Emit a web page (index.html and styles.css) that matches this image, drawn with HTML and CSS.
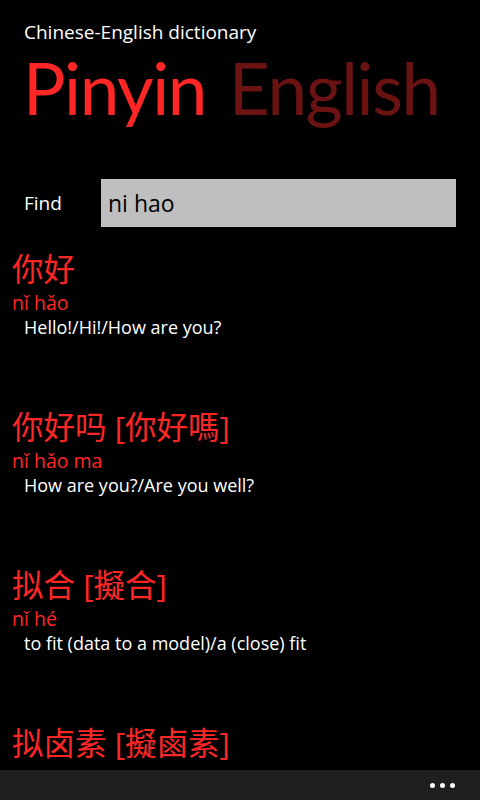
FILE: index.html
```html
<!DOCTYPE html>
<html>
<head>
    <title>Chinese-English dictionary</title>
    <link rel="stylesheet" href="styles.css">
</head>
<body>
    <div class="page">
        <div class="header">
            <div class="app-title">Chinese-English dictionary</div>
            <div class="pivot">
                <span class="pivot-item active">Pinyin</span>
                <span class="pivot-item">English</span>
            </div>
        </div>

        <div class="find-row">
            <label for="findInput">Find</label>
            <input type="text" id="findInput" value="ni hao">
        </div>

        <ul class="results">
            <li class="entry">
                <div class="hanzi">你好</div>
                <div class="pinyin">nǐ hǎo</div>
                <div class="meaning">Hello!/Hi!/How are you?</div>
            </li>
            <li class="entry">
                <div class="hanzi">你好吗 [你好嗎]</div>
                <div class="pinyin">nǐ hǎo ma</div>
                <div class="meaning">How are you?/Are you well?</div>
            </li>
            <li class="entry">
                <div class="hanzi">拟合 [擬合]</div>
                <div class="pinyin">nǐ hé</div>
                <div class="meaning">to fit (data to a model)/a (close) fit</div>
            </li>
            <li class="entry">
                <div class="hanzi">拟卤素 [擬鹵素]</div>
            </li>
        </ul>

        <div class="app-bar">
            <span class="dot"></span>
            <span class="dot"></span>
            <span class="dot"></span>
        </div>
    </div>
</body>
</html>
```

FILE: styles.css
```css
html, body {
    margin: 0;
    padding: 0;
    background-color: #000;
}
body {
    font-family: 'Open Sans', 'Noto Sans CJK SC', sans-serif;
    color: #fff;
}
.page {
    height: 800px;
    display: flex;
    flex-direction: column;
    overflow: hidden;
}
.header {
    padding: 20px 0 0 24px;
}
.app-title {
    font-size: 19px;
    line-height: 24px;
}
.pivot {
    font-family: 'Lato', sans-serif;
    font-size: 71px;
    line-height: 72px;
    letter-spacing: -1.4px;
    white-space: nowrap;
    margin-top: 8px;
    margin-left: -1px;
}
.pivot-item {
    color: #6b1212;
    margin-right: 6px;
}
.pivot-item.active {
    color: #ff2626;
}
.find-row {
    display: flex;
    align-items: center;
    margin-top: 55px;
    padding: 0 24px;
}
.find-row label {
    font-size: 19px;
    width: 77px;
}
.find-row input {
    flex: 1;
    height: 48px;
    box-sizing: border-box;
    border: none;
    background-color: #bfbfbf;
    color: #000;
    font-family: 'Open Sans', sans-serif;
    font-size: 23px;
    padding: 0 7px;
    outline: none;
}
.results {
    list-style: none;
    margin: 19px 0 0 0;
    padding: 0 12px;
    flex: 1;
    overflow: hidden;
}
.entry {
    height: 158px;
}
.hanzi {
    color: #ff2626;
    font-size: 31.5px;
    line-height: 46px;
}
.pinyin {
    color: #ff2626;
    font-size: 19.5px;
    line-height: 22px;
}
.meaning {
    font-size: 18px;
    line-height: 26px;
    padding-left: 12px;
}
.app-bar {
    height: 30px;
    flex: none;
    background-color: #1f1f1f;
    display: flex;
    justify-content: flex-end;
    align-items: center;
    gap: 5px;
    padding-right: 25px;
}
.dot {
    width: 5px;
    height: 5px;
    border-radius: 50%;
    background-color: #fff;
}
```
